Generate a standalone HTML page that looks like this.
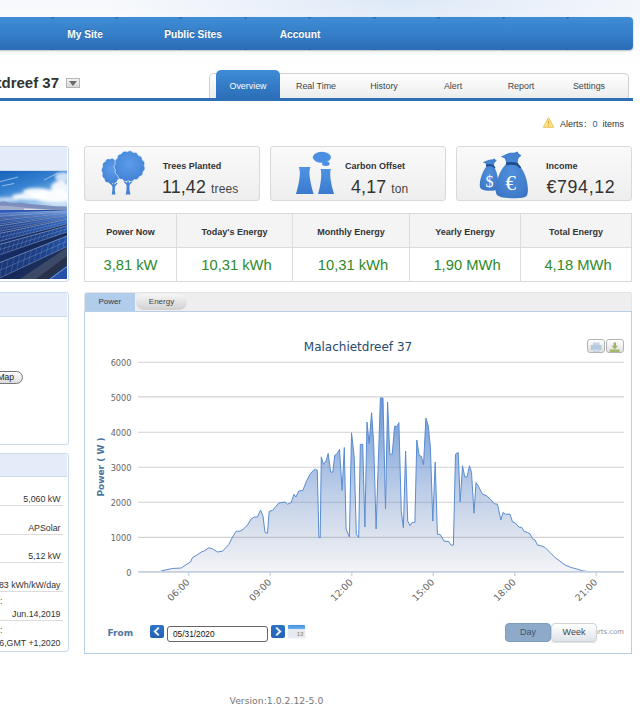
<!DOCTYPE html>
<html>
<head>
<meta charset="utf-8">
<title>Malachietdreef 37</title>
<style>
html,body{margin:0;padding:0;}
body{width:640px;height:711px;overflow:hidden;background:#fff;font-family:"Liberation Sans",Arial,sans-serif;color:#333;position:relative;}
.abs{position:absolute;}
#topbg{left:0;top:0;width:640px;height:70px;background:radial-gradient(ellipse 300px 55px at 400px 0px,#dde8f7 0%,#ecf2fa 50%,rgba(255,255,255,0) 100%),linear-gradient(to bottom,#f7f9fc 0%,#ffffff 100%);}
#nav{left:-10px;top:17px;width:642.5px;height:33px;border-radius:4px;background:linear-gradient(to bottom,#3f8dd6 0%,#3780ca 45%,#2b6db7 100%);box-shadow:0 1px 2px rgba(0,0,0,.25);}
.navi{top:18px;height:33px;line-height:34px;color:#fff;font-weight:bold;font-size:10.2px;text-align:center;width:120px;text-shadow:0 -1px 0 rgba(0,0,0,.25);}
#title{right:581px;top:73px;font-size:15px;text-align:right;font-weight:bold;color:#333;white-space:nowrap;line-height:20px;}
#dd{left:66px;top:78px;width:12px;height:8px;border:1px solid #b5b5b5;background:linear-gradient(#f4f4f4,#d8d8d8);}
#dd:after{content:"";position:absolute;left:2px;top:2px;border:4px solid transparent;border-top:5px solid #6a6a6a;border-bottom:0;}
#tabbar{left:209px;top:73px;width:420px;height:26px;border:1px solid #d0d0d0;border-bottom:0;border-radius:5px 5px 0 0;background:linear-gradient(#ffffff,#ececec);box-sizing:border-box;}
#tabline{left:-5px;top:97.7px;width:638px;height:3px;background:#2f6fb5;}
#tabact{left:216px;top:70px;width:64px;height:29px;border-radius:5px 5px 0 0;background:linear-gradient(#3f8dd6,#2b6db7);}
.tab{top:73px;height:26px;line-height:26.5px;font-size:8.9px;color:#444;text-align:center;width:68px;}
.card{top:146px;width:176px;height:55px;box-sizing:border-box;border:1px solid #d9d9d9;border-radius:3px;background:linear-gradient(#fafafa,#eeeeee);}
.card .lbl{position:absolute;font-size:9px;font-weight:bold;color:#333;top:14px;white-space:nowrap;}
.card .val{position:absolute;font-size:17.8px;color:#333;top:30px;letter-spacing:0.15px;white-space:nowrap;}
.card .val small{font-size:12px;color:#444;}
#tbl{left:84px;top:213px;width:548px;height:69px;box-sizing:border-box;border:1px solid #d9d9d9;background:#fff;}
#tblh{left:85px;top:214px;width:546px;height:33px;background:#f4f4f4;border-bottom:1px solid #dcdcdc;}
.vl{top:214px;width:1px;height:67px;background:#dcdcdc;}
.th{top:215px;height:34px;line-height:34.5px;font-size:9px;font-weight:bold;color:#333;text-align:center;}
.td{top:248.5px;height:32px;line-height:32px;font-size:14.75px;padding-left:2px;color:#2e8a2a;text-align:center;}
.panel{box-sizing:border-box;border:1px solid #c9d9ee;border-radius:3px;background:#fff;}
.phead{background:#e4ecfa;border-bottom:1px solid #c9d9ee;}
.srow{right:577px;width:120px;padding-right:2.5px;text-align:right;font-size:8.8px;color:#333;white-space:nowrap;border-bottom:1px solid #dcdcdc;height:12px;line-height:12px;}
.navbtn{width:14px;height:13px;border-radius:2px;background:linear-gradient(#2f74c8,#2260b4);}
.navbtn svg,.cbtn svg{position:absolute;left:0;top:0;}
.cbtn{width:17.5px;height:14px;box-sizing:border-box;border:1px solid #b4b4b4;border-radius:3px;background:linear-gradient(#fdfdfd,#e2e2e2);}
.cbtn svg{left:-1px;top:-1px;}
</style>
</head>
<body>
<div id="topbg" class="abs"></div>
<div id="nav" class="abs"></div>
<div class="abs" style="left:50.5px;top:17px;width:3px;height:1.5px;background:#2c64a6;opacity:.7;border-radius:0 0 2px 2px"></div><div class="abs" style="left:50.5px;top:48.5px;width:3px;height:1.5px;background:#1f4f8e;opacity:.6;border-radius:2px 2px 0 0"></div><div class="abs" style="left:115.0px;top:17px;width:3px;height:1.5px;background:#2c64a6;opacity:.7;border-radius:0 0 2px 2px"></div><div class="abs" style="left:115.0px;top:48.5px;width:3px;height:1.5px;background:#1f4f8e;opacity:.6;border-radius:2px 2px 0 0"></div><div class="abs" style="left:179.4px;top:17px;width:3px;height:1.5px;background:#2c64a6;opacity:.7;border-radius:0 0 2px 2px"></div><div class="abs" style="left:179.4px;top:48.5px;width:3px;height:1.5px;background:#1f4f8e;opacity:.6;border-radius:2px 2px 0 0"></div><div class="abs" style="left:243.9px;top:17px;width:3px;height:1.5px;background:#2c64a6;opacity:.7;border-radius:0 0 2px 2px"></div><div class="abs" style="left:243.9px;top:48.5px;width:3px;height:1.5px;background:#1f4f8e;opacity:.6;border-radius:2px 2px 0 0"></div><div class="abs" style="left:308.3px;top:17px;width:3px;height:1.5px;background:#2c64a6;opacity:.7;border-radius:0 0 2px 2px"></div><div class="abs" style="left:308.3px;top:48.5px;width:3px;height:1.5px;background:#1f4f8e;opacity:.6;border-radius:2px 2px 0 0"></div><div class="abs" style="left:372.8px;top:17px;width:3px;height:1.5px;background:#2c64a6;opacity:.7;border-radius:0 0 2px 2px"></div><div class="abs" style="left:372.8px;top:48.5px;width:3px;height:1.5px;background:#1f4f8e;opacity:.6;border-radius:2px 2px 0 0"></div><div class="abs" style="left:437.2px;top:17px;width:3px;height:1.5px;background:#2c64a6;opacity:.7;border-radius:0 0 2px 2px"></div><div class="abs" style="left:437.2px;top:48.5px;width:3px;height:1.5px;background:#1f4f8e;opacity:.6;border-radius:2px 2px 0 0"></div><div class="abs" style="left:501.7px;top:17px;width:3px;height:1.5px;background:#2c64a6;opacity:.7;border-radius:0 0 2px 2px"></div><div class="abs" style="left:501.7px;top:48.5px;width:3px;height:1.5px;background:#1f4f8e;opacity:.6;border-radius:2px 2px 0 0"></div><div class="abs" style="left:566.1px;top:17px;width:3px;height:1.5px;background:#2c64a6;opacity:.7;border-radius:0 0 2px 2px"></div><div class="abs" style="left:566.1px;top:48.5px;width:3px;height:1.5px;background:#1f4f8e;opacity:.6;border-radius:2px 2px 0 0"></div>
<div class="abs navi" style="left:25px">My Site</div>
<div class="abs navi" style="left:133px">Public Sites</div>
<div class="abs navi" style="left:240px">Account</div>

<div id="title" class="abs">Malachietdreef 37</div>
<div id="dd" class="abs"></div>

<div id="tabbar" class="abs"></div>
<div id="tabact" class="abs"></div>
<div id="tabline" class="abs"></div>
<div class="abs tab" style="left:214px;color:#fff">Overview</div>
<div class="abs tab" style="left:282px">Real Time</div>
<div class="abs tab" style="left:350px">History</div>
<div class="abs tab" style="left:419px">Alert</div>
<div class="abs tab" style="left:487px">Report</div>
<div class="abs tab" style="left:555px">Settings</div>

<!-- ALERTS -->
<div id="alerts" class="abs" style="left:560px;top:118px;font-size:9px;color:#333;white-space:nowrap;line-height:12px;">Alerts<span style="margin-left:1px">:</span><span style="color:#2a5fa8;margin-left:6px">0</span><span style="margin-left:5px">items</span></div>

<svg class="abs" style="left:541px;top:115px" width="16" height="15" viewBox="541 115 16 15"><path d="M548.5 117.6 L553.7 127.3 L543.3 127.3 Z" fill="#fbe48c" stroke="#e6c55e" stroke-width="1" stroke-linejoin="round"/><path d="M548.5 120.8 V124.6" stroke="#d9aa34" stroke-width="1.1"/><circle cx="548.5" cy="125.9" r="0.6" fill="#d9aa34"/></svg>
<!-- CARDS -->
<div class="abs card" style="left:84px"><div class="lbl" style="left:77.7px">Trees Planted</div><div class="val" style="left:77px">11,42 <small>trees</small></div></div>
<div class="abs card" style="left:270px"><div class="lbl" style="left:74px">Carbon Offset</div><div class="val" style="left:80px">4,17 <small>ton</small></div></div>
<div class="abs card" style="left:456px"><div class="lbl" style="left:89px">Income</div><div class="val" style="left:89.5px;letter-spacing:0.65px">€794,12</div></div>


<!-- ICONS -->
<svg class="abs" style="left:84px;top:146px" width="90" height="55" viewBox="84 146 90 55">
<defs>
<radialGradient id="gt" cx="0.48" cy="0.42" r="0.62"><stop offset="0" stop-color="#5c9be8"/><stop offset="0.65" stop-color="#4a8bdc"/><stop offset="1" stop-color="#3f7fd2"/></radialGradient>
<linearGradient id="gb" x1="0" y1="0" x2="0" y2="1"><stop offset="0" stop-color="#4f93e4"/><stop offset="1" stop-color="#3b7acc"/></linearGradient>
</defs>
<path d="M111.7 194.5 C112.5 191 112.6 188.5 112.3 186.2 L109.8 183.2 L110.8 182.4 L113 184.6 L113.3 181.5 L114.4 181.5 L114.6 184.8 L116.6 182.6 L117.5 183.4 L115 186.4 C114.7 189 114.8 191.5 115.5 194.5 Z" fill="#4383d6"/>
<path d="M121.95 171.00 L122.00 171.45 L122.00 171.90 L121.93 172.35 L121.81 172.78 L121.63 173.20 L121.41 173.60 L121.14 173.98 L120.85 174.34 L120.53 174.67 L120.29 175.02 L120.34 175.47 L120.36 175.92 L120.35 176.36 L120.30 176.80 L120.21 177.22 L120.07 177.62 L119.89 177.99 L119.66 178.33 L119.39 178.63 L119.09 178.89 L118.76 179.12 L118.40 179.31 L118.04 179.46 L117.66 179.59 L117.35 179.77 L117.24 180.19 L117.10 180.60 L116.94 180.99 L116.74 181.35 L116.52 181.68 L116.26 181.97 L115.97 182.21 L115.66 182.41 L115.33 182.55 L114.98 182.64 L114.62 182.68 L114.26 182.68 L113.90 182.64 L113.54 182.57 L113.21 182.58 L112.92 182.88 L112.62 183.15 L112.29 183.39 L111.95 183.59 L111.60 183.74 L111.24 183.84 L110.87 183.87 L110.51 183.84 L110.16 183.75 L109.81 183.60 L109.48 183.40 L109.17 183.16 L108.88 182.87 L108.62 182.56 L108.33 182.33 L107.94 182.36 L107.55 182.37 L107.17 182.34 L106.79 182.26 L106.42 182.13 L106.08 181.95 L105.77 181.71 L105.49 181.43 L105.25 181.09 L105.05 180.72 L104.89 180.31 L104.77 179.87 L104.68 179.42 L104.63 178.95 L104.51 178.55 L104.17 178.34 L103.84 178.11 L103.53 177.84 L103.24 177.55 L102.99 177.22 L102.78 176.86 L102.62 176.48 L102.50 176.07 L102.43 175.64 L102.41 175.20 L102.44 174.75 L102.51 174.30 L102.61 173.85 L102.74 173.40 L102.78 172.99 L102.53 172.62 L102.29 172.24 L102.08 171.84 L101.90 171.43 L101.77 171.00 L101.68 170.57 L101.65 170.13 L101.67 169.69 L101.74 169.27 L101.86 168.85 L102.03 168.45 L102.23 168.06 L102.47 167.69 L102.73 167.35 L102.90 166.98 L102.80 166.51 L102.72 166.03 L102.68 165.55 L102.68 165.08 L102.73 164.63 L102.83 164.19 L102.98 163.79 L103.18 163.41 L103.42 163.07 L103.71 162.77 L104.03 162.51 L104.38 162.30 L104.76 162.11 L105.14 161.97 L105.46 161.77 L105.59 161.34 L105.75 160.93 L105.94 160.54 L106.17 160.19 L106.42 159.87 L106.71 159.60 L107.03 159.39 L107.38 159.23 L107.74 159.12 L108.12 159.08 L108.50 159.09 L108.89 159.14 L109.27 159.24 L109.65 159.37 L109.99 159.43 L110.29 159.19 L110.60 158.98 L110.92 158.79 L111.26 158.65 L111.60 158.56 L111.95 158.52 L112.30 158.53 L112.64 158.60 L112.98 158.73 L113.30 158.91 L113.60 159.13 L113.89 159.40 L114.15 159.69 L114.40 160.01 L114.66 160.24 L115.03 160.19 L115.41 160.16 L115.78 160.17 L116.16 160.22 L116.52 160.32 L116.86 160.46 L117.18 160.66 L117.47 160.90 L117.73 161.18 L117.96 161.51 L118.15 161.87 L118.31 162.26 L118.43 162.67 L118.53 163.09 L118.69 163.44 L119.08 163.62 L119.46 163.82 L119.83 164.05 L120.17 164.32 L120.47 164.63 L120.73 164.97 L120.95 165.34 L121.11 165.75 L121.22 166.18 L121.28 166.62 L121.28 167.08 L121.24 167.55 L121.16 168.01 L121.04 168.47 L121.01 168.91 L121.26 169.29 L121.49 169.70 L121.69 170.12 L121.84 170.56 Z" fill="url(#gt)"/>
<path d="M125.6 194.5 C126.6 190.5 126.8 187.5 126.4 184.8 L123.4 181.4 L124.5 180.4 L127 183 L127.4 179.5 L128.8 179.5 L129 183.4 L131.6 180.6 L132.6 181.6 L129.6 185 C129.2 188 129.5 191 130.6 194.5 Z" fill="#4383d6"/>
<path d="M144.39 166.30 L144.65 166.84 L144.85 167.39 L144.97 167.95 L144.99 168.51 L144.93 169.06 L144.76 169.59 L144.51 170.09 L144.18 170.57 L143.78 171.00 L143.33 171.41 L142.93 171.81 L142.96 172.38 L142.95 172.96 L142.88 173.52 L142.73 174.06 L142.51 174.55 L142.21 175.01 L141.83 175.40 L141.38 175.74 L140.88 176.02 L140.33 176.24 L139.76 176.41 L139.24 176.60 L139.05 177.13 L138.82 177.64 L138.54 178.12 L138.20 178.55 L137.82 178.93 L137.38 179.23 L136.89 179.45 L136.37 179.59 L135.82 179.66 L135.25 179.67 L134.68 179.62 L134.15 179.62 L133.77 180.06 L133.36 180.47 L132.92 180.83 L132.45 181.13 L131.95 181.35 L131.43 181.49 L130.90 181.53 L130.36 181.49 L129.83 181.37 L129.30 181.17 L128.79 180.93 L128.29 180.74 L127.75 181.01 L127.20 181.24 L126.64 181.41 L126.07 181.50 L125.51 181.50 L124.97 181.42 L124.45 181.24 L123.96 180.97 L123.51 180.63 L123.10 180.22 L122.73 179.77 L122.35 179.37 L121.75 179.37 L121.16 179.33 L120.58 179.22 L120.04 179.04 L119.54 178.79 L119.10 178.46 L118.72 178.05 L118.41 177.58 L118.17 177.05 L117.99 176.49 L117.86 175.90 L117.71 175.35 L117.20 175.09 L116.71 174.79 L116.26 174.45 L115.87 174.06 L115.55 173.61 L115.31 173.13 L115.15 172.60 L115.08 172.04 L115.10 171.47 L115.18 170.89 L115.32 170.31 L115.41 169.76 L115.05 169.33 L114.72 168.87 L114.44 168.39 L114.24 167.88 L114.11 167.36 L114.07 166.83 L114.12 166.30 L114.25 165.77 L114.47 165.26 L114.75 164.77 L115.07 164.30 L115.34 163.84 L115.15 163.29 L115.00 162.73 L114.90 162.17 L114.88 161.61 L114.93 161.07 L115.08 160.55 L115.31 160.07 L115.61 159.62 L115.99 159.22 L116.42 158.86 L116.89 158.54 L117.30 158.21 L117.34 157.61 L117.41 157.01 L117.55 156.44 L117.75 155.90 L118.03 155.41 L118.38 154.99 L118.79 154.63 L119.26 154.34 L119.79 154.12 L120.34 153.97 L120.92 153.88 L121.46 153.75 L121.75 153.23 L122.09 152.74 L122.47 152.29 L122.89 151.91 L123.36 151.61 L123.87 151.39 L124.41 151.26 L124.98 151.23 L125.56 151.28 L126.14 151.41 L126.71 151.60 L127.25 151.74 L127.74 151.42 L128.24 151.15 L128.76 150.93 L129.30 150.79 L129.84 150.73 L130.39 150.77 L130.92 150.90 L131.43 151.12 L131.92 151.41 L132.39 151.78 L132.82 152.19 L133.25 152.54 L133.80 152.44 L134.36 152.39 L134.92 152.39 L135.46 152.46 L135.98 152.61 L136.46 152.84 L136.89 153.15 L137.28 153.53 L137.61 153.97 L137.90 154.46 L138.15 154.98 L138.41 155.44 L138.98 155.55 L139.54 155.70 L140.07 155.89 L140.57 156.15 L141.01 156.47 L141.39 156.86 L141.69 157.30 L141.92 157.78 L142.09 158.31 L142.18 158.86 L142.23 159.43 L142.31 159.96 L142.81 160.28 L143.29 160.65 L143.71 161.05 L144.08 161.50 L144.36 161.98 L144.56 162.50 L144.66 163.03 L144.67 163.59 L144.60 164.15 L144.45 164.71 L144.25 165.25 L144.09 165.78 Z" fill="url(#gt)" stroke="#e4edf9" stroke-width="0.8"/>
</svg>

<svg class="abs" style="left:270px;top:146px" width="80" height="55" viewBox="270 146 80 55">
<path d="M298.8 166.9 L310.5 166.9 C309.2 170 309.2 174 309.9 178 C310.8 184 312.2 189.5 313.7 194 L295.9 194 C297.4 189.5 298.7 184 299.5 178 C300.1 174 300.1 170 298.8 166.9 Z" fill="url(#gb)"/>
<path d="M320.6 169 L330.8 169 C330 172 330.1 176 330.7 180 C331.5 185 332.7 190 334.1 194 L318 194 C319.3 190 320.3 185 320.9 180 C321.4 176 321.4 172 320.6 169 Z" fill="url(#gb)"/>
<ellipse cx="321.9" cy="157.3" rx="9.1" ry="5.5" fill="#4a8fe2"/>
<ellipse cx="325.8" cy="163.7" rx="3.8" ry="2.2" fill="#4a8fe2"/>
</svg>

<svg class="abs" style="left:456px;top:146px" width="90" height="55" viewBox="456 146 90 55">
<defs><radialGradient id="gm" cx="0.5" cy="0.45" r="0.65"><stop offset="0" stop-color="#4f8fdc"/><stop offset="0.7" stop-color="#437fcd"/><stop offset="1" stop-color="#3a74c2"/></radialGradient></defs>
<!-- small bag -->
<path d="M483 162.4 C485 161.2 486.6 160.6 488.4 160 C490 159.4 491.6 159.6 493 159.2 L495 158.4 L495.4 160 L496.8 160.8 L494.6 162.6 L493.4 166.2 C495.6 168.6 497.4 173.6 497.8 178.6 C498.2 183.6 498 188.2 496.4 189.8 C494.8 191.2 489 191 485.6 190.4 C482.4 189.8 480.4 189 479.9 187 C479.4 184.4 480.2 179.6 481.6 175.6 C482.8 172 484.6 168.6 486.6 166.2 L485.6 163.6 Z" fill="url(#gm)"/>
<path d="M485.8 164.6 C488.4 164 491.4 164.2 493.8 165 L495.6 168 L494.4 168.4 L493 166.8 C490.8 166.2 488.4 166.2 486.4 166.8 Z" fill="#1f4a8c"/>
<!-- big bag -->
<path d="M500.6 156.6 C503.4 155.6 505.4 154.4 507.6 153.4 C510 152.4 512.6 153.2 515 152.6 L517.6 151.4 L518.6 153.6 L521.4 155.6 L518.6 158 L517.4 163.6 C521.4 167 525.4 174 526.8 181 C528 187 528.6 193 526.6 196 C524.6 198.4 515 198.4 507.6 198 C501.6 197.6 496.8 196.4 496 193 C495 189 496 183 498.2 177 C500.2 171.6 503.4 166.6 506.6 163.6 L504.8 158.4 Z" fill="url(#gm)"/>
<path d="M505.8 162.6 C509.4 161.6 514 161.8 517.6 162.8 L521.2 167.6 L519.8 168.6 L516.8 165.6 C513.4 164.6 509.6 164.6 506.4 165.4 Z" fill="#1f4a8c"/>
<text x="485.6" y="186.6" font-family="'Liberation Serif',serif" font-size="16" fill="#fff">$</text>
<text x="505.6" y="190.2" font-family="'Liberation Serif',serif" font-size="21" fill="#fff">€</text>
</svg>

<!-- TABLE -->
<div id="tbl" class="abs"></div>
<div id="tblh" class="abs"></div>
<div class="abs vl" style="left:176px"></div>
<div class="abs vl" style="left:292px"></div>
<div class="abs vl" style="left:409px"></div>
<div class="abs vl" style="left:520px"></div>
<div class="abs th" style="left:85px;width:91px">Power Now</div>
<div class="abs th" style="left:177px;width:115px">Today's Energy</div>
<div class="abs th" style="left:293px;width:116px">Monthly Energy</div>
<div class="abs th" style="left:410px;width:110px">Yearly Energy</div>
<div class="abs th" style="left:521px;width:110px">Total Energy</div>
<div class="abs td" style="left:85px;width:91px;padding-left:0">3,81 kW</div>
<div class="abs td" style="left:177px;width:115px">10,31 kWh</div>
<div class="abs td" style="left:293px;width:116px">10,31 kWh</div>
<div class="abs td" style="left:410px;width:110px">1,90 MWh</div>
<div class="abs td" style="left:521px;width:110px">4,18 MWh</div>

<!-- SIDEBAR -->
<div class="abs panel" style="left:-20px;top:146px;width:88.5px;height:136px;"></div>
<div class="abs phead" style="left:-19px;top:147px;width:86px;height:23px;border-radius:2px 2px 0 0"></div>
<div class="abs panel" style="left:-20px;top:292px;width:88.5px;height:153px;"></div>
<div class="abs phead" style="left:-19px;top:293px;width:86px;height:23px;border-radius:2px 2px 0 0"></div>
<div class="abs panel" style="left:-20px;top:453px;width:88.5px;height:199px;"></div>
<div class="abs phead" style="left:-19px;top:454px;width:86px;height:22px;border-radius:2px 2px 0 0"></div>


<!-- SIDEBAR CONTENT -->
<div class="abs" style="left:-30px;top:371px;width:53px;height:13px;box-sizing:border-box;border:1px solid #777;border-radius:7px;background:linear-gradient(#fdfdfd,#dcdcdc);font-size:8.5px;line-height:11.5px;text-align:right;padding-right:8px;color:#222;">View Map</div>
<div class="abs srow" style="top:493px;">5,060 kW</div>
<div class="abs srow" style="top:521.8px;">APSolar</div>
<div class="abs srow" style="top:550.4px;">5,12 kW</div>
<div class="abs srow" style="top:578.9px;">4,83 kWh/kW/day</div>
<div class="abs srow" style="top:608.3px;">Jun.14,2019</div>
<div class="abs srow" style="top:636.8px;border-bottom:0;">Jun.16,GMT +1,2020</div>
<div class="abs" style="left:0;top:596px;font-size:9px;line-height:10px;color:#555;">:</div>
<div class="abs" style="left:0;top:625px;font-size:9px;line-height:10px;color:#555;">:</div>
<!-- PHOTO -->
<svg class="abs" style="left:0;top:171px" width="67" height="108" viewBox="0 171 67 108">
<defs>
<linearGradient id="sky" x1="0" y1="0" x2="0.5" y2="1"><stop offset="0" stop-color="#1963bb"/><stop offset="0.45" stop-color="#3782d2"/><stop offset="0.8" stop-color="#8dbdea"/><stop offset="1" stop-color="#c4dcf4"/></linearGradient>
<linearGradient id="pr1" x1="0" y1="0" x2="1" y2="0"><stop offset="0" stop-color="#1a3574"/><stop offset="0.6" stop-color="#1d4088"/><stop offset="1" stop-color="#2452a4"/></linearGradient>
<linearGradient id="pr2" x1="0" y1="0" x2="1" y2="0"><stop offset="0" stop-color="#1c3a7e"/><stop offset="0.5" stop-color="#214a9a"/><stop offset="1" stop-color="#2d64bc"/></linearGradient>
<linearGradient id="pr3" x1="0" y1="0" x2="1" y2="0"><stop offset="0" stop-color="#204690"/><stop offset="0.5" stop-color="#2a5cb2"/><stop offset="1" stop-color="#3672cc"/></linearGradient>
<linearGradient id="pbase" x1="0" y1="0" x2="1" y2="1"><stop offset="0" stop-color="#1b3b86"/><stop offset="0.5" stop-color="#14285a"/><stop offset="1" stop-color="#26385c"/></linearGradient>
<filter id="bl" x="-20%" y="-20%" width="140%" height="140%"><feGaussianBlur stdDeviation="1.5"/></filter>
<filter id="bl2" x="-20%" y="-20%" width="140%" height="140%"><feGaussianBlur stdDeviation="0.7"/></filter>
</defs>
<rect x="0" y="171" width="67" height="40" fill="url(#sky)"/>
<g filter="url(#bl)" fill="#ffffff">
<ellipse cx="54" cy="196" rx="22" ry="6.5" opacity="0.95"/>
<ellipse cx="36" cy="191.5" rx="13" ry="3.6" opacity="0.9"/>
<ellipse cx="30" cy="196.5" rx="18" ry="3.6" opacity="0.9"/>
<ellipse cx="60" cy="187" rx="9" ry="6" opacity="0.9"/>
<ellipse cx="63" cy="177" rx="8" ry="5" opacity="0.75"/>
<ellipse cx="6" cy="199.5" rx="14" ry="2.2" opacity="0.65"/>
</g>
<g filter="url(#bl2)" stroke="#cfe4f8" stroke-width="0.9" opacity="0.7"><path d="M-1 182 L18 177"/><path d="M2 186 L14 183.5"/><path d="M44 180 L58 173"/></g>
<path d="M-1 202.6 L4 201.2 L9 202.4 L14 203 L20 202.4 L26 203.6 L32 204.2 L40 204.8 L48 205.6 L56 206.2 L67 206.4 L67 211 L-1 211 Z" fill="#7d8fbd"/>
<path d="M-1 205.6 L10 206 L22 207.4 L34 208.2 L46 209.4 L58 210 L67 210.4 L67 212 L-1 212 Z" fill="#aab4cf" opacity="0.85"/>
<path d="M24 208.4 L67 210.8 L67 212.6 L24 210.2 Z" fill="#ebe8e0" opacity="0.85"/>
<rect x="0" y="210" width="67" height="69" fill="url(#pbase)"/>
<path d="M-1 210 L67 210.6 L67 213.2 L-1 216.4 Z" fill="#2d5fba"/>
<path d="M-2 263.3 L67 236 L67 246.5 L-2 278.8 Z" fill="url(#pr1)" opacity="1"/>
<path d="M-2 263.3 L67 236" stroke="#b5c9ec" stroke-width="0.7" opacity="0.75"/>
<path d="M-2 278.8 L67 246.5" stroke="#c5d2ea" stroke-width="0.6" opacity="0.6"/>
<path d="M-2 271.05 L67 241.25" stroke="#9db5e2" stroke-width="0.5" opacity="0.6"/>
<path d="M-2 244.9 L67 225.7 L67 232 L-2 255.3 Z" fill="url(#pr1)" opacity="1"/>
<path d="M-2 244.9 L67 225.7" stroke="#b5c9ec" stroke-width="0.7" opacity="0.75"/>
<path d="M-2 255.3 L67 232" stroke="#c5d2ea" stroke-width="0.6" opacity="0.6"/>
<path d="M-2 250.10000000000002 L67 228.85" stroke="#9db5e2" stroke-width="0.5" opacity="0.6"/>
<path d="M-2 233.7 L67 219.3 L67 224 L-2 241.7 Z" fill="url(#pr2)" opacity="1"/>
<path d="M-2 233.7 L67 219.3" stroke="#b5c9ec" stroke-width="0.7" opacity="0.75"/>
<path d="M-2 241.7 L67 224" stroke="#c5d2ea" stroke-width="0.6" opacity="0.6"/>
<path d="M-2 237.7 L67 221.65" stroke="#9db5e2" stroke-width="0.5" opacity="0.6"/>
<path d="M-2 226 L67 215.6 L67 218.6 L-2 231.6 Z" fill="url(#pr2)" opacity="1"/>
<path d="M-2 226 L67 215.6" stroke="#b5c9ec" stroke-width="0.7" opacity="0.75"/>
<path d="M-2 231.6 L67 218.6" stroke="#c5d2ea" stroke-width="0.6" opacity="0.6"/>
<path d="M-2 228.8 L67 217.1" stroke="#9db5e2" stroke-width="0.5" opacity="0.6"/>
<path d="M-2 220.5 L67 213.2 L67 215 L-2 224.3 Z" fill="url(#pr3)" opacity="1"/>
<path d="M-2 220.5 L67 213.2" stroke="#b5c9ec" stroke-width="0.7" opacity="0.75"/>
<path d="M-2 224.3 L67 215" stroke="#c5d2ea" stroke-width="0.6" opacity="0.6"/>
<path d="M-2 222.4 L67 214.1" stroke="#9db5e2" stroke-width="0.5" opacity="0.6"/>
<path d="M-2 216.6 L67 211.6 L67 212.8 L-2 219.2 Z" fill="url(#pr3)" opacity="1"/>
<path d="M-2 216.6 L67 211.6" stroke="#b5c9ec" stroke-width="0.7" opacity="0.75"/>
<path d="M-2 219.2 L67 212.8" stroke="#c5d2ea" stroke-width="0.6" opacity="0.6"/>
<path d="M-2 217.89999999999998 L67 212.2" stroke="#9db5e2" stroke-width="0.5" opacity="0.6"/>
<path d="M-2 213.6 L67 210.6 L67 211.4 L-2 215.4 Z" fill="url(#pr3)" opacity="1"/>
<path d="M-2 213.6 L67 210.6" stroke="#b5c9ec" stroke-width="0.7" opacity="0.75"/>
<path d="M-2 215.4 L67 211.4" stroke="#c5d2ea" stroke-width="0.6" opacity="0.6"/>
<path d="M-2 214.5 L67 211.0" stroke="#9db5e2" stroke-width="0.5" opacity="0.6"/>
<path d="M2.4 262.2 L-0.3 277.5" stroke="#a8bfe6" stroke-width="0.4" opacity="0.5"/>
<path d="M8.1 259.9 L5.4 274.8" stroke="#a8bfe6" stroke-width="0.4" opacity="0.5"/>
<path d="M13.9 257.6 L11.2 272.1" stroke="#a8bfe6" stroke-width="0.4" opacity="0.5"/>
<path d="M19.6 255.3 L16.9 269.4" stroke="#a8bfe6" stroke-width="0.4" opacity="0.5"/>
<path d="M25.4 253.1 L22.7 266.7" stroke="#a8bfe6" stroke-width="0.4" opacity="0.5"/>
<path d="M31.1 250.8 L28.4 264.0" stroke="#a8bfe6" stroke-width="0.4" opacity="0.5"/>
<path d="M36.9 248.5 L34.2 261.3" stroke="#a8bfe6" stroke-width="0.4" opacity="0.5"/>
<path d="M42.6 246.2 L39.9 258.6" stroke="#a8bfe6" stroke-width="0.4" opacity="0.5"/>
<path d="M48.4 244.0 L45.7 255.9" stroke="#a8bfe6" stroke-width="0.4" opacity="0.5"/>
<path d="M54.1 241.7 L51.4 253.2" stroke="#a8bfe6" stroke-width="0.4" opacity="0.5"/>
<path d="M59.9 239.4 L57.2 250.5" stroke="#a8bfe6" stroke-width="0.4" opacity="0.5"/>
<path d="M65.6 237.1 L62.9 247.8" stroke="#a8bfe6" stroke-width="0.4" opacity="0.5"/>
<path d="M1.7 244.3 L-1.0 254.6" stroke="#a8bfe6" stroke-width="0.4" opacity="0.5"/>
<path d="M6.0 243.1 L3.3 253.1" stroke="#a8bfe6" stroke-width="0.4" opacity="0.5"/>
<path d="M10.3 241.9 L7.6 251.7" stroke="#a8bfe6" stroke-width="0.4" opacity="0.5"/>
<path d="M14.6 240.7 L11.9 250.2" stroke="#a8bfe6" stroke-width="0.4" opacity="0.5"/>
<path d="M18.9 239.5 L16.2 248.7" stroke="#a8bfe6" stroke-width="0.4" opacity="0.5"/>
<path d="M23.2 238.3 L20.5 247.3" stroke="#a8bfe6" stroke-width="0.4" opacity="0.5"/>
<path d="M27.5 237.1 L24.8 245.8" stroke="#a8bfe6" stroke-width="0.4" opacity="0.5"/>
<path d="M31.8 235.9 L29.1 244.4" stroke="#a8bfe6" stroke-width="0.4" opacity="0.5"/>
<path d="M36.2 234.7 L33.5 242.9" stroke="#a8bfe6" stroke-width="0.4" opacity="0.5"/>
<path d="M40.5 233.5 L37.8 241.5" stroke="#a8bfe6" stroke-width="0.4" opacity="0.5"/>
<path d="M44.8 232.3 L42.1 240.0" stroke="#a8bfe6" stroke-width="0.4" opacity="0.5"/>
<path d="M49.1 231.1 L46.4 238.6" stroke="#a8bfe6" stroke-width="0.4" opacity="0.5"/>
<path d="M53.4 229.9 L50.7 237.1" stroke="#a8bfe6" stroke-width="0.4" opacity="0.5"/>
<path d="M57.7 228.7 L55.0 235.6" stroke="#a8bfe6" stroke-width="0.4" opacity="0.5"/>
<path d="M62.0 227.5 L59.3 234.2" stroke="#a8bfe6" stroke-width="0.4" opacity="0.5"/>
<path d="M66.3 226.3 L63.6 232.7" stroke="#a8bfe6" stroke-width="0.4" opacity="0.5"/>
<path d="M1.2 233.3 L-1.5 241.3" stroke="#a8bfe6" stroke-width="0.4" opacity="0.5"/>
<path d="M4.7 232.6 L2.0 240.4" stroke="#a8bfe6" stroke-width="0.4" opacity="0.5"/>
<path d="M8.1 231.9 L5.4 239.5" stroke="#a8bfe6" stroke-width="0.4" opacity="0.5"/>
<path d="M11.6 231.2 L8.9 238.6" stroke="#a8bfe6" stroke-width="0.4" opacity="0.5"/>
<path d="M15.0 230.5 L12.3 237.7" stroke="#a8bfe6" stroke-width="0.4" opacity="0.5"/>
<path d="M18.5 229.7 L15.8 236.8" stroke="#a8bfe6" stroke-width="0.4" opacity="0.5"/>
<path d="M21.9 229.0 L19.2 235.9" stroke="#a8bfe6" stroke-width="0.4" opacity="0.5"/>
<path d="M25.4 228.3 L22.7 235.1" stroke="#a8bfe6" stroke-width="0.4" opacity="0.5"/>
<path d="M28.8 227.6 L26.1 234.2" stroke="#a8bfe6" stroke-width="0.4" opacity="0.5"/>
<path d="M32.3 226.9 L29.6 233.3" stroke="#a8bfe6" stroke-width="0.4" opacity="0.5"/>
<path d="M35.7 226.1 L33.0 232.4" stroke="#a8bfe6" stroke-width="0.4" opacity="0.5"/>
<path d="M39.2 225.4 L36.5 231.5" stroke="#a8bfe6" stroke-width="0.4" opacity="0.5"/>
<path d="M42.6 224.7 L39.9 230.6" stroke="#a8bfe6" stroke-width="0.4" opacity="0.5"/>
<path d="M46.1 224.0 L43.4 229.8" stroke="#a8bfe6" stroke-width="0.4" opacity="0.5"/>
<path d="M49.5 223.3 L46.8 228.9" stroke="#a8bfe6" stroke-width="0.4" opacity="0.5"/>
<path d="M53.0 222.5 L50.3 228.0" stroke="#a8bfe6" stroke-width="0.4" opacity="0.5"/>
<path d="M56.4 221.8 L53.7 227.1" stroke="#a8bfe6" stroke-width="0.4" opacity="0.5"/>
<path d="M59.9 221.1 L57.2 226.2" stroke="#a8bfe6" stroke-width="0.4" opacity="0.5"/>
<path d="M63.3 220.4 L60.6 225.3" stroke="#a8bfe6" stroke-width="0.4" opacity="0.5"/>
<path d="M66.8 219.7 L64.1 224.4" stroke="#a8bfe6" stroke-width="0.4" opacity="0.5"/>
<path d="M0.8 225.8 L-1.9 231.3" stroke="#a8bfe6" stroke-width="0.4" opacity="0.5"/>
<path d="M3.5 225.4 L0.8 230.8" stroke="#a8bfe6" stroke-width="0.4" opacity="0.5"/>
<path d="M6.1 225.0 L3.4 230.3" stroke="#a8bfe6" stroke-width="0.4" opacity="0.5"/>
<path d="M8.8 224.6 L6.1 229.8" stroke="#a8bfe6" stroke-width="0.4" opacity="0.5"/>
<path d="M11.4 224.2 L8.7 229.3" stroke="#a8bfe6" stroke-width="0.4" opacity="0.5"/>
<path d="M14.1 223.8 L11.4 228.8" stroke="#a8bfe6" stroke-width="0.4" opacity="0.5"/>
<path d="M16.8 223.4 L14.1 228.3" stroke="#a8bfe6" stroke-width="0.4" opacity="0.5"/>
<path d="M19.4 223.0 L16.7 227.8" stroke="#a8bfe6" stroke-width="0.4" opacity="0.5"/>
<path d="M22.1 222.6 L19.4 227.3" stroke="#a8bfe6" stroke-width="0.4" opacity="0.5"/>
<path d="M24.7 222.2 L22.0 226.8" stroke="#a8bfe6" stroke-width="0.4" opacity="0.5"/>
<path d="M27.4 221.8 L24.7 226.3" stroke="#a8bfe6" stroke-width="0.4" opacity="0.5"/>
<path d="M30.0 221.4 L27.3 225.8" stroke="#a8bfe6" stroke-width="0.4" opacity="0.5"/>
<path d="M32.7 221.0 L30.0 225.3" stroke="#a8bfe6" stroke-width="0.4" opacity="0.5"/>
<path d="M35.3 220.6 L32.6 224.8" stroke="#a8bfe6" stroke-width="0.4" opacity="0.5"/>
<path d="M38.0 220.2 L35.3 224.3" stroke="#a8bfe6" stroke-width="0.4" opacity="0.5"/>
<path d="M40.6 219.8 L37.9 223.8" stroke="#a8bfe6" stroke-width="0.4" opacity="0.5"/>
<path d="M43.3 219.4 L40.6 223.3" stroke="#a8bfe6" stroke-width="0.4" opacity="0.5"/>
<path d="M45.9 219.0 L43.2 222.8" stroke="#a8bfe6" stroke-width="0.4" opacity="0.5"/>
<path d="M48.6 218.6 L45.9 222.3" stroke="#a8bfe6" stroke-width="0.4" opacity="0.5"/>
<path d="M51.2 218.2 L48.5 221.8" stroke="#a8bfe6" stroke-width="0.4" opacity="0.5"/>
<path d="M53.9 217.8 L51.2 221.3" stroke="#a8bfe6" stroke-width="0.4" opacity="0.5"/>
<path d="M56.6 217.4 L53.9 220.8" stroke="#a8bfe6" stroke-width="0.4" opacity="0.5"/>
<path d="M59.2 217.0 L56.5 220.3" stroke="#a8bfe6" stroke-width="0.4" opacity="0.5"/>
<path d="M61.9 216.6 L59.2 219.8" stroke="#a8bfe6" stroke-width="0.4" opacity="0.5"/>
<path d="M64.5 216.2 L61.8 219.3" stroke="#a8bfe6" stroke-width="0.4" opacity="0.5"/>
<path d="M67.2 215.8 L64.5 218.8" stroke="#a8bfe6" stroke-width="0.4" opacity="0.5"/>

<path d="M20 279 L67 247.5 L67 262 L44 279 Z" fill="#3c4a68"/>
<path d="M36 279 L67 256 L67 262 L46 279 Z" fill="#273149"/>
<path d="M50 279 L67 266.5 L67 279 Z" fill="#2552a8"/>
<path d="M50 279 L67 266.5" stroke="#b5c9ec" stroke-width="0.7"/>
</svg>
<!-- CHART -->
<div class="abs" style="left:84px;top:292px;width:548px;height:20px;box-sizing:border-box;border:1px solid #e4e4e4;border-bottom:0;border-radius:3px 3px 0 0;background:#eeeeee;"></div>
<div class="abs" style="left:84px;top:311px;width:548px;height:343px;box-sizing:border-box;border:1px solid #b9cfe8;background:#fff;"></div>
<div class="abs" style="left:84.5px;top:293px;width:50.5px;height:18px;background:#b2cceb;font-size:8px;line-height:18.5px;text-align:center;color:#3a3a3a;border-radius:2px 0 0 0;">Power</div>
<div class="abs" style="left:136px;top:294px;width:51px;height:16px;box-sizing:border-box;border-radius:8px;background:linear-gradient(#f6f6f6,#d0d0d0);font-size:8px;line-height:16.5px;text-align:center;color:#444;">Energy</div>
<!--CS--><svg class="abs" style="left:84px;top:311px" width="548" height="343" viewBox="84 311 548 343" font-family="'DejaVu Sans',Verdana,sans-serif" font-size="8.2" fill="#666">
<defs><linearGradient id="ga" gradientUnits="userSpaceOnUse" x1="0" y1="362" x2="0" y2="572.5"><stop offset="0" stop-color="#4a84d6" stop-opacity="0.95"/><stop offset="0.17" stop-color="#4e86d6" stop-opacity="0.86"/><stop offset="0.6" stop-color="#5a86c8" stop-opacity="0.42"/><stop offset="1" stop-color="#7080a8" stop-opacity="0.08"/></linearGradient></defs>
<path d="M138 362.2 H624" stroke="#d2d2d2" stroke-width="1.1"/>
<path d="M138 396.9 H624" stroke="#d2d2d2" stroke-width="1.1"/>
<path d="M138 432.2 H624" stroke="#d2d2d2" stroke-width="1.1"/>
<path d="M138 467.3 H624" stroke="#d2d2d2" stroke-width="1.1"/>
<path d="M138 502.3 H624" stroke="#d2d2d2" stroke-width="1.1"/>
<path d="M138 537.4 H624" stroke="#d2d2d2" stroke-width="1.1"/>
<path d="M158.8 571.8 L165.0 570.0 L172.5 568.5 L181.2 568.0 L187.5 563.8 L190.5 562.0 L192.5 557.5 L196.2 555.5 L201.2 552.0 L203.8 551.2 L208.8 547.8 L212.5 548.8 L217.5 552.0 L222.5 551.2 L228.8 544.5 L232.5 537.0 L236.2 531.2 L240.0 531.2 L243.8 528.8 L247.5 525.0 L251.2 518.8 L254.5 517.0 L257.5 517.0 L260.5 510.0 L263.0 516.2 L265.0 532.5 L267.5 533.2 L269.2 511.2 L272.5 510.5 L278.8 503.0 L285.0 502.0 L287.5 504.2 L291.2 502.5 L294.0 494.3 L295.9 497.0 L298.8 491.0 L302.8 490.5 L306.6 480.9 L310.0 474.2 L313.5 470.2 L315.4 469.4 L317.3 470.2 L318.9 537.6 L320.2 537.6 L321.3 456.8 L323.4 464.3 L326.1 460.9 L328.2 453.4 L330.6 472.1 L332.8 472.1 L334.7 455.5 L337.3 453.4 L339.5 449.4 L342.1 490.3 L344.3 447.5 L346.1 529.0 L349.4 537.0 L351.5 432.8 L354.2 456.8 L356.3 534.4 L358.7 537.6 L360.3 444.3 L362.7 444.3 L364.9 526.9 L367.0 422.1 L369.1 443.5 L371.6 412.7 L373.7 443.5 L376.1 529.0 L380.4 398.0 L383.0 398.0 L385.5 509.0 L387.6 402.0 L389.8 454.2 L392.2 454.2 L394.6 426.1 L396.7 426.6 L398.9 422.6 L401.3 511.7 L403.4 527.7 L405.6 451.0 L407.7 521.0 L410.1 525.6 L412.2 522.4 L414.9 522.4 L416.8 440.0 L419.2 455.5 L421.3 456.3 L423.5 464.9 L425.9 418.1 L428.3 426.1 L430.4 447.5 L432.8 521.0 L435.2 462.2 L437.4 534.4 L440.1 534.4 L444.1 541.1 L448.9 541.6 L451.0 545.1 L453.4 545.1 L455.5 454.2 L458.2 452.5 L460.2 502.0 L462.5 465.8 L464.8 477.0 L467.0 477.0 L469.5 465.8 L471.5 472.5 L474.0 513.2 L476.0 482.5 L478.0 485.5 L482.5 494.2 L486.2 495.5 L490.0 498.8 L494.5 503.8 L497.5 504.2 L500.8 520.0 L503.0 512.5 L505.5 514.2 L510.0 514.2 L512.5 522.0 L515.5 523.0 L518.8 527.0 L521.8 527.5 L523.8 531.2 L527.5 532.5 L530.0 533.8 L532.5 538.8 L535.0 540.0 L537.5 545.0 L541.2 545.8 L545.0 547.5 L550.0 552.5 L555.0 557.5 L560.0 561.2 L565.0 565.0 L571.2 567.5 L577.5 569.2 L582.5 570.8 L587.5 571.5 L590.0 572.0 L590.0 572 L158.8 572 Z" fill="url(#ga)"/>
<path d="M158.8 571.8 L165.0 570.0 L172.5 568.5 L181.2 568.0 L187.5 563.8 L190.5 562.0 L192.5 557.5 L196.2 555.5 L201.2 552.0 L203.8 551.2 L208.8 547.8 L212.5 548.8 L217.5 552.0 L222.5 551.2 L228.8 544.5 L232.5 537.0 L236.2 531.2 L240.0 531.2 L243.8 528.8 L247.5 525.0 L251.2 518.8 L254.5 517.0 L257.5 517.0 L260.5 510.0 L263.0 516.2 L265.0 532.5 L267.5 533.2 L269.2 511.2 L272.5 510.5 L278.8 503.0 L285.0 502.0 L287.5 504.2 L291.2 502.5 L294.0 494.3 L295.9 497.0 L298.8 491.0 L302.8 490.5 L306.6 480.9 L310.0 474.2 L313.5 470.2 L315.4 469.4 L317.3 470.2 L318.9 537.6 L320.2 537.6 L321.3 456.8 L323.4 464.3 L326.1 460.9 L328.2 453.4 L330.6 472.1 L332.8 472.1 L334.7 455.5 L337.3 453.4 L339.5 449.4 L342.1 490.3 L344.3 447.5 L346.1 529.0 L349.4 537.0 L351.5 432.8 L354.2 456.8 L356.3 534.4 L358.7 537.6 L360.3 444.3 L362.7 444.3 L364.9 526.9 L367.0 422.1 L369.1 443.5 L371.6 412.7 L373.7 443.5 L376.1 529.0 L380.4 398.0 L383.0 398.0 L385.5 509.0 L387.6 402.0 L389.8 454.2 L392.2 454.2 L394.6 426.1 L396.7 426.6 L398.9 422.6 L401.3 511.7 L403.4 527.7 L405.6 451.0 L407.7 521.0 L410.1 525.6 L412.2 522.4 L414.9 522.4 L416.8 440.0 L419.2 455.5 L421.3 456.3 L423.5 464.9 L425.9 418.1 L428.3 426.1 L430.4 447.5 L432.8 521.0 L435.2 462.2 L437.4 534.4 L440.1 534.4 L444.1 541.1 L448.9 541.6 L451.0 545.1 L453.4 545.1 L455.5 454.2 L458.2 452.5 L460.2 502.0 L462.5 465.8 L464.8 477.0 L467.0 477.0 L469.5 465.8 L471.5 472.5 L474.0 513.2 L476.0 482.5 L478.0 485.5 L482.5 494.2 L486.2 495.5 L490.0 498.8 L494.5 503.8 L497.5 504.2 L500.8 520.0 L503.0 512.5 L505.5 514.2 L510.0 514.2 L512.5 522.0 L515.5 523.0 L518.8 527.0 L521.8 527.5 L523.8 531.2 L527.5 532.5 L530.0 533.8 L532.5 538.8 L535.0 540.0 L537.5 545.0 L541.2 545.8 L545.0 547.5 L550.0 552.5 L555.0 557.5 L560.0 561.2 L565.0 565.0 L571.2 567.5 L577.5 569.2 L582.5 570.8 L587.5 571.5 L590.0 572.0" fill="none" stroke="#5a8cd0" stroke-width="1" stroke-linejoin="round"/>
<path d="M138 571.9 H624" stroke="#c3cfdf" stroke-width="1.6"/>
<text x="131.5" y="366.1" text-anchor="end">6000</text>
<text x="131.5" y="400.8" text-anchor="end">5000</text>
<text x="131.5" y="436.1" text-anchor="end">4000</text>
<text x="131.5" y="471.2" text-anchor="end">3000</text>
<text x="131.5" y="506.2" text-anchor="end">2000</text>
<text x="131.5" y="541.3" text-anchor="end">1000</text>
<text x="131.5" y="576.4" text-anchor="end">0</text>
<path d="M188.8 572 V576" stroke="#c0d0e0" stroke-width="1.2"/>
<text transform="translate(190.3 582.8) rotate(-45)" text-anchor="end" font-size="9.3">06:00</text>
<path d="M270.2 572 V576" stroke="#c0d0e0" stroke-width="1.2"/>
<text transform="translate(271.9 582.8) rotate(-45)" text-anchor="end" font-size="9.3">09:00</text>
<path d="M351.8 572 V576" stroke="#c0d0e0" stroke-width="1.2"/>
<text transform="translate(353.4 582.8) rotate(-45)" text-anchor="end" font-size="9.3">12:00</text>
<path d="M433.2 572 V576" stroke="#c0d0e0" stroke-width="1.2"/>
<text transform="translate(434.9 582.8) rotate(-45)" text-anchor="end" font-size="9.3">15:00</text>
<path d="M514.8 572 V576" stroke="#c0d0e0" stroke-width="1.2"/>
<text transform="translate(516.4 582.8) rotate(-45)" text-anchor="end" font-size="9.3">18:00</text>
<path d="M596.2 572 V576" stroke="#c0d0e0" stroke-width="1.2"/>
<text transform="translate(597.9 582.8) rotate(-45)" text-anchor="end" font-size="9.3">21:00</text>
<text x="358" y="350.5" text-anchor="middle" font-size="12" fill="#274b6d">Malachietdreef 37</text>
<text transform="translate(104 467) rotate(-90)" text-anchor="middle" font-size="9" font-weight="bold" fill="#4d759e">Power ( W )</text>
<text x="624" y="633.5" text-anchor="end" font-size="6.9" fill="#909090">Highcharts.com</text>
</svg><!--CE-->



<!-- CHART CONTROLS -->
<div class="abs" style="left:107.5px;top:627px;font-family:'DejaVu Sans',Verdana,sans-serif;font-weight:bold;font-size:9px;color:#4d759e;line-height:13px;">From</div>
<div class="abs navbtn" style="left:150px;top:625px;"><svg width="14" height="13" viewBox="0 0 14 13"><path d="M8.8 2.6 L4.8 6.5 L8.8 10.4" fill="none" stroke="#e8f1fc" stroke-width="2"/></svg></div>
<div class="abs" style="left:167px;top:626px;width:101px;height:15.5px;box-sizing:border-box;border:1px solid #666;border-radius:3px;background:#fff;font-size:8.3px;line-height:14px;padding-left:5px;color:#111;">05/31/2020</div>
<div class="abs navbtn" style="left:271px;top:625px;"><svg width="14" height="13" viewBox="0 0 14 13"><path d="M5.2 2.6 L9.2 6.5 L5.2 10.4" fill="none" stroke="#e8f1fc" stroke-width="2"/></svg></div>
<div class="abs" style="left:288px;top:625px;width:17px;height:12.5px;background:#e6eaf0;border-radius:1px;box-shadow:0 0 1px #b8c0cc;overflow:hidden;"><div style="height:3.5px;background:linear-gradient(#3f93e4,#69aeea);"></div><div style="position:absolute;right:1.5px;bottom:0.5px;font-size:6px;line-height:6px;color:#9a9a9a;font-weight:bold;">12</div></div>
<div class="abs" style="left:505px;top:623px;width:46px;height:19px;box-sizing:border-box;border:1px solid #7f9cbd;border-radius:4px;background:#8daacb;font-size:9px;line-height:17px;text-align:center;color:#44556a;">Day</div>
<div class="abs" style="left:551px;top:623px;width:46px;height:19px;box-sizing:border-box;border:1px solid #cfd3d8;border-radius:4px;background:linear-gradient(#ffffff,#dfe4ea);font-size:9px;line-height:17px;text-align:center;color:#444;box-shadow:0 1px 1px rgba(0,0,0,.12);">Week</div>
<div class="abs cbtn" style="left:587px;top:339px;"><svg width="17" height="14" viewBox="587 339 17 14"><rect x="593" y="342.6" width="6.6" height="3.4" fill="#c3d3e6"/><rect x="590.8" y="345" width="10.8" height="5" fill="#b5c9df"/><rect x="593" y="349" width="6.6" height="3" fill="#c9d7e8"/></svg></div>
<div class="abs cbtn" style="left:606px;top:339px;"><svg width="17" height="14" viewBox="606 339 17 14"><rect x="609.8" y="349.4" width="9.8" height="2.6" fill="#a4b86a"/><path d="M613.6 342.6 H616 V345.8 H618.2 L614.8 349.2 L611.4 345.8 H613.6 Z" fill="#9fb070"/></svg></div>

<div class="abs" style="left:229.5px;top:695px;font-family:'DejaVu Sans',Verdana,sans-serif;font-size:9.3px;color:#777;white-space:nowrap;line-height:12px;">Version:1.0.2.12-5.0</div>
</body>
</html>
